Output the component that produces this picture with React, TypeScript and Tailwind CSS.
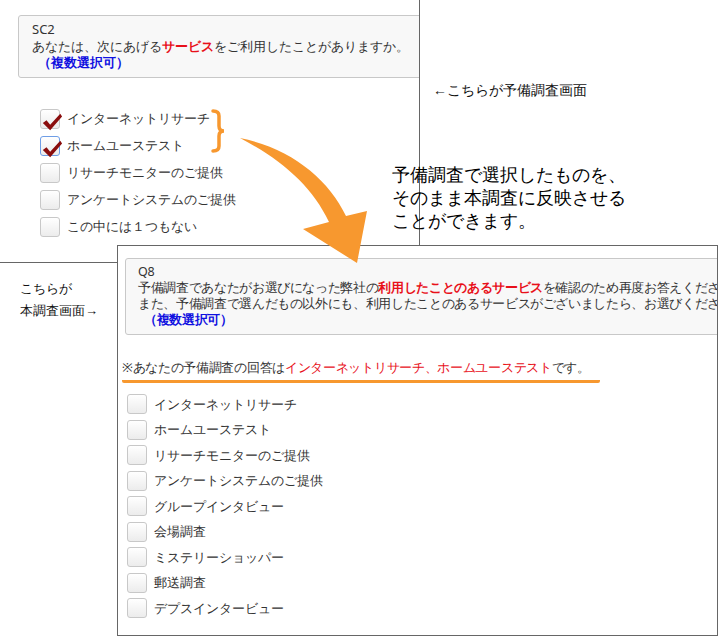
const FONT = "font-['Liberation_Sans','Noto_Sans_CJK_JP',sans-serif]"

function Box({ checked, blue }: { checked?: boolean; blue?: boolean }) {
  return (
    <span
      className={`relative inline-block h-[20px] w-[20px] shrink-0 rounded-[3px] border bg-gradient-to-b from-white to-[#ececec] ${
        blue ? 'border-[#6f9ee6]' : 'border-[#c8c8c8]'
      }`}
    >
      {checked && (
        <svg viewBox="0 0 24 24" className="absolute -left-[1px] top-[1px] h-[22px] w-[24px]">
          <path d="M2 13 L6 10 L10 15 L21 3 L23 6 L10 21 Z" fill="#8a0d0d" />
        </svg>
      )}
    </span>
  )
}

function Row({ label, checked, blue, h }: { label: string; checked?: boolean; blue?: boolean; h: string }) {
  return (
    <div className={`flex items-center gap-[7px] ${h}`}>
      <Box checked={checked} blue={blue} />
      <span className="text-[13px] text-[#333]">{label}</span>
    </div>
  )
}

const mainItems = [
  'インターネットリサーチ',
  'ホームユーステスト',
  'リサーチモニターのご提供',
  'アンケートシステムのご提供',
  'グループインタビュー',
  '会場調査',
  'ミステリーショッパー',
  '郵送調査',
  'デプスインタービュー',
]

export default function App() {
  return (
    <div className={`relative h-[636px] w-[718px] overflow-hidden bg-white ${FONT}`}>
      {/* pre-survey window */}
      <div className="absolute left-0 top-0 h-[263px] w-[420px] border-r border-b border-[#666] overflow-hidden">
        <div className="ml-[18px] mt-[15px] w-[420px] rounded-[3px] border border-[#c8c8c8] bg-[#f8f8f8] px-[13px] pt-[5px] pb-[6px] text-[13px] leading-[16.5px] text-[#333]">
          <div>SC2</div>
          <div>
            あなたは、次にあげる<span className="font-bold text-[#e8101a]">サービス</span>をご利用したことがありますか。
          </div>
          <div className="pl-[6px] font-bold text-[#1010e0]">（複数選択可）</div>
        </div>
        <div className="ml-[40px] mt-[28px] flex flex-col">
          <Row h="h-[27px]" label="インターネットリサーチ" checked />
          <Row h="h-[27px]" label="ホームユーステスト" checked blue />
          <Row h="h-[27px]" label="リサーチモニターのご提供" />
          <Row h="h-[27px]" label="アンケートシステムのご提供" />
          <Row h="h-[27px]" label="この中には１つもない" />
        </div>
      </div>

      {/* bracket */}
      <svg className="absolute left-[210px] top-[108px]" width="16" height="46" viewBox="0 0 16 46">
        <path d="M3 3 Q9 3 9 8 L9 18 Q9 23 14 23 Q9 23 9 28 L9 38 Q9 43 3 43" fill="none" stroke="#f7982f" strokeWidth="3.5" strokeLinecap="round" />
      </svg>

      <div className="absolute left-[433px] top-[79px] text-[14px] font-medium text-[#111]">←こちらが予備調査画面</div>
      <div className="absolute left-[392px] top-[163px] text-[18px] leading-[23px] text-black">
        予備調査で選択したものを、
        <br />
        そのまま本調査に反映させる
        <br />
        ことができます。
      </div>
      <div className="absolute left-[20px] top-[277px] text-[13px] leading-[22px] font-medium text-[#111]">
        こちらが
        <br />
        本調査画面→
      </div>

      {/* main survey window */}
      <div className="absolute left-[117px] top-[245px] h-[391px] w-[601px] border border-[#666] bg-white overflow-hidden">
        <div className="ml-[7px] mt-[12px] w-[600px] rounded-[3px] border border-[#c8c8c8] bg-[#f8f8f8] px-[12px] pt-[5px] pb-[6px] text-[12.5px] tracking-[-0.35px] leading-[16px] text-[#333] whitespace-nowrap">
          <div>Q8</div>
          <div>
            予備調査であなたがお選びになった弊社の<span className="font-bold text-[#e8101a]">利用したことのあるサービス</span>を確認のため再度お答えください。
          </div>
          <div>また、予備調査で選んだもの以外にも、利用したことのあるサービスがございましたら、お選びください。</div>
          <div className="pl-[6px] font-bold text-[#1010e0]">（複数選択可）</div>
        </div>
        <div className="ml-[4px] mt-[23px] inline-block border-b-[3px] border-[#f7982f] rounded-[2px] pr-[10px] pb-[2px] text-[13px] tracking-[-0.3px] text-[#333]">
          ※あなたの予備調査の回答は<span className="text-[#e8101a]">インターネットリサーチ、ホームユーステスト</span>です。
        </div>
        <div className="ml-[9px] mt-[9px] flex flex-col">
          {mainItems.map((l) => (
            <Row key={l} h="h-[25.5px]" label={l} />
          ))}
        </div>
      </div>

      {/* arrow */}
      <svg className="absolute left-0 top-0" width="718" height="636" viewBox="0 0 718 636">
        <path d="M240 138 C290 148 328 178 346 216 L367 211 L357 263 L303 229 L329 222 C312 186 282 160 240 138 Z" fill="#f7982f" />
      </svg>
    </div>
  )
}
